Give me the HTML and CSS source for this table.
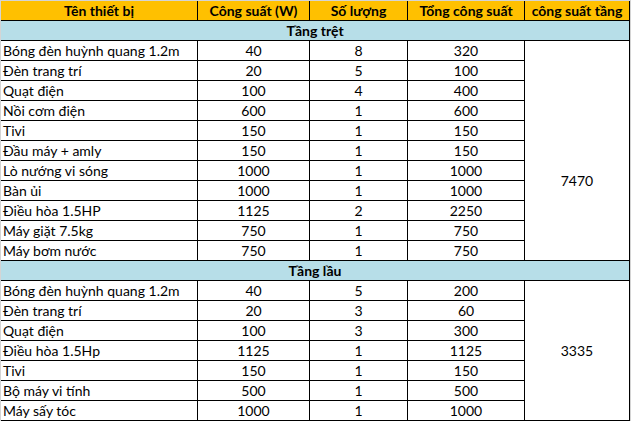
FILE: index.html
```html
<!DOCTYPE html>
<html lang="vi">
<head>
<meta charset="utf-8">
<title>Công suất thiết bị</title>
<link rel="stylesheet" href="styles.css">
</head>
<body>
<div class="sheet">
  <div class="cell head">Tên thiết bị</div>
  <div class="cell head">Công suất (W)</div>
  <div class="cell head">Số lượng</div>
  <div class="cell head">Tổng công suất</div>
  <div class="cell head">công suất tầng</div>

  <div class="cell section">Tầng trệt</div>
  <div class="cell total total-ground">7470</div>

  <div class="cell name">Bóng đèn huỳnh quang 1.2m</div><div class="cell">40</div><div class="cell">8</div><div class="cell">320</div>
  <div class="cell name">Đèn trang trí</div><div class="cell">20</div><div class="cell">5</div><div class="cell">100</div>
  <div class="cell name">Quạt điện</div><div class="cell">100</div><div class="cell">4</div><div class="cell">400</div>
  <div class="cell name">Nồi cơm điện</div><div class="cell">600</div><div class="cell">1</div><div class="cell">600</div>
  <div class="cell name">Tivi</div><div class="cell">150</div><div class="cell">1</div><div class="cell">150</div>
  <div class="cell name">Đầu máy + amly</div><div class="cell">150</div><div class="cell">1</div><div class="cell">150</div>
  <div class="cell name">Lò nướng vi sóng</div><div class="cell">1000</div><div class="cell">1</div><div class="cell">1000</div>
  <div class="cell name">Bàn ủi</div><div class="cell">1000</div><div class="cell">1</div><div class="cell">1000</div>
  <div class="cell name">Điều hòa 1.5HP</div><div class="cell">1125</div><div class="cell">2</div><div class="cell">2250</div>
  <div class="cell name">Máy giặt 7.5kg</div><div class="cell">750</div><div class="cell">1</div><div class="cell">750</div>
  <div class="cell name">Máy bơm nước</div><div class="cell">750</div><div class="cell">1</div><div class="cell">750</div>

  <div class="cell section">Tầng lầu</div>
  <div class="cell total total-upper">3335</div>

  <div class="cell name">Bóng đèn huỳnh quang 1.2m</div><div class="cell">40</div><div class="cell">5</div><div class="cell">200</div>
  <div class="cell name">Đèn trang trí</div><div class="cell">20</div><div class="cell">3</div><div class="cell">60</div>
  <div class="cell name">Quạt điện</div><div class="cell">100</div><div class="cell">3</div><div class="cell">300</div>
  <div class="cell name">Điều hòa 1.5Hp</div><div class="cell">1125</div><div class="cell">1</div><div class="cell">1125</div>
  <div class="cell name">Tivi</div><div class="cell">150</div><div class="cell">1</div><div class="cell">150</div>
  <div class="cell name">Bộ máy vi tính</div><div class="cell">500</div><div class="cell">1</div><div class="cell">500</div>
  <div class="cell name">Máy sấy tóc</div><div class="cell">1000</div><div class="cell">1</div><div class="cell">1000</div>
</div>
</body>
</html>
```
FILE: styles.css
```css
html, body {
  margin: 0;
  padding: 0;
}
body {
  background: #d4d4d4;
  width: 631px;
  height: 421px;
  overflow: hidden;
  font-family: Lato, "Liberation Sans", sans-serif;
  font-size: 14px;
  color: #000;
}
.sheet {
  margin: 1px 0 0 1px;
  width: 629px;
  display: grid;
  grid-template-columns: 197px 112px 98px 117px 105px;
  grid-auto-rows: 20px;
  background: #fff;
}
.cell {
  box-sizing: border-box;
  border-right: 1px solid #000;
  border-bottom: 1px solid #000;
  display: flex;
  align-items: flex-end;
  justify-content: center;
  line-height: 18px;
  padding-bottom: 0;
  white-space: nowrap;
  overflow: hidden;
}
.head {
  background: #ffc000;
  font-weight: bold;
}
.section {
  grid-column: 1 / -1;
  background: #b7dee8;
  font-weight: bold;
}
.name {
  justify-content: flex-start;
  padding-left: 2px;
}
.total {
  grid-column: 5;
  align-items: center;
}
.total-ground {
  grid-row: 3 / span 11;
  padding-top: 60px;
}
.total-upper {
  grid-row: 15 / span 7;
}
```
